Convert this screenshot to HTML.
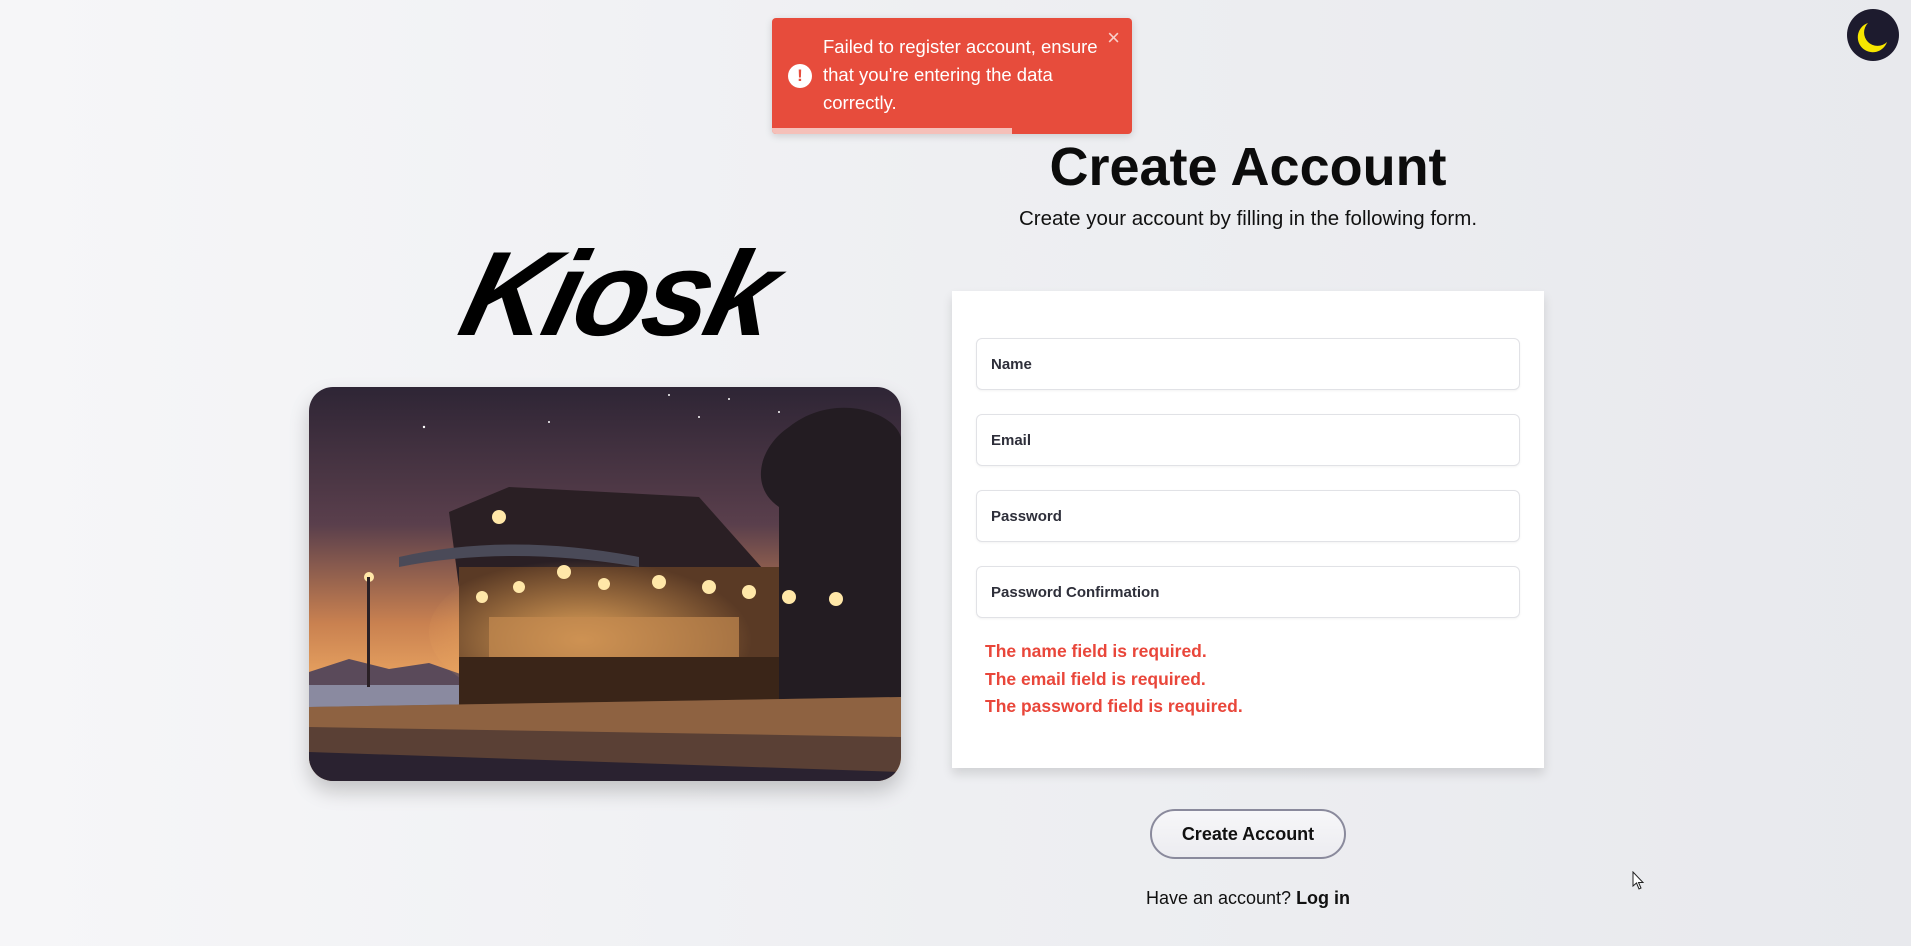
<!DOCTYPE html>
<html><head><meta charset="utf-8"><style>
*{margin:0;padding:0;box-sizing:border-box}
body{width:1911px;height:946px;overflow:hidden;position:relative;font-family:"Liberation Sans",sans-serif;background:linear-gradient(90deg,#f6f6f8 0%,#eeeff2 50%,#e8e9ed 100%);}
.abs{position:absolute}
.toast{left:772px;top:18px;width:360px;height:116px;background:#e74c3c;border-radius:4px;box-shadow:0 2px 8px rgba(0,0,0,.15);color:#fff;font-family:"Liberation Sans",sans-serif;font-size:18.5px;line-height:28px;overflow:hidden}
.toast .txt{position:absolute;left:51px;top:15px;width:290px}
.toast .bar{position:absolute;left:0;bottom:0;width:240px;height:6px;background:#f5c0b9}
.toast .x{position:absolute;right:12px;top:6px;font-size:22px;color:#f8d0cb}
.toast .ic{position:absolute;left:16px;top:46px;width:24px;height:24px;border-radius:50%;background:#fff;color:#e74c3c;font-weight:bold;font-size:17px;line-height:24px;text-align:center}
h1{position:absolute;left:1000px;width:496px;top:136px;text-align:center;font-size:54px;font-weight:bold;color:#0c0c0c}
.sub{position:absolute;left:960px;width:576px;top:207px;text-align:center;font-size:20.5px;color:#111}
.card{left:952px;top:291px;width:592px;height:477px;background:#fff;box-shadow:0 6px 10px rgba(0,0,0,.12)}
.inp{position:absolute;left:24px;width:544px;height:52px;border:1px solid #e1e2e6;border-radius:6px;box-shadow:0 1px 2px rgba(0,0,0,.05);font-size:15px;font-weight:bold;color:#2e2f3a;padding-left:14px;line-height:52px}
.err{position:absolute;left:33px;top:347px;color:#e9463a;font-size:17.5px;font-weight:bold;line-height:27.5px}
.btn{left:1150px;top:809px;width:196px;height:50px;border-radius:25px;border:2px solid #8a8a9c;background:linear-gradient(180deg,#f7f7f9,#ececf0);text-align:center;line-height:46px;font-weight:bold;font-size:18px;color:#111}
.login{left:1100px;width:296px;top:888px;text-align:center;font-size:18px;color:#111}
.img{left:309px;top:387px;width:592px;height:394px;border-radius:24px;overflow:hidden;box-shadow:0 10px 20px rgba(0,0,0,.2)}
</style></head><body>

<svg class="abs" style="left:450px;top:195px" width="340" height="165" viewBox="0 0 340 165">
<text x="10" y="140" font-family="Liberation Sans, sans-serif" font-style="italic" font-weight="bold" font-size="120" transform="skewX(-14) translate(30,0)" fill="#000" letter-spacing="-4">Kiosk</text>
</svg>

<div class="abs img">
<svg width="592" height="394" viewBox="0 0 592 394">
<defs>
<linearGradient id="sky" x1="0" y1="0" x2="0" y2="1">
<stop offset="0" stop-color="#2e2535"/><stop offset="0.35" stop-color="#5a3f4c"/><stop offset="0.6" stop-color="#c98150"/><stop offset="0.75" stop-color="#e9a461"/><stop offset="1" stop-color="#e9a461"/></linearGradient>
<radialGradient id="glow" cx="0.45" cy="0.55" r="0.5"><stop offset="0" stop-color="#f2b060" stop-opacity=".9"/><stop offset="1" stop-color="#f2b060" stop-opacity="0"/></radialGradient>
</defs>
<rect width="592" height="394" fill="url(#sky)"/>
<path d="M0 305 L0 285 L40 272 L80 282 L120 276 L160 290 L592 290 L592 305Z" fill="#5a4a5a"/>
<rect y="298" width="592" height="40" fill="#8a8aa0"/>
<path d="M480 40 C530 0 600 30 592 60 L592 340 L470 340 L470 120 C440 100 450 60 480 40Z" fill="#231c22"/>
<path d="M140 125 L200 100 L390 110 L470 200 L470 330 L150 330 L150 200 Z" fill="#2a1f24"/>
<path d="M90 170 Q200 145 330 170 L330 180 Q200 158 90 180Z" fill="#4a4a58"/>
<rect x="150" y="180" width="320" height="140" fill="#5a3a25"/>
<ellipse cx="290" cy="245" rx="170" ry="80" fill="url(#glow)"/>
<rect x="180" y="230" width="250" height="40" fill="#c48a50" opacity=".7"/>
<rect x="150" y="270" width="320" height="50" fill="#3a2518"/>
<path d="M0 320 L592 310 L592 394 L0 394Z" fill="#5a4035"/>
<path d="M0 320 L592 310 L592 350 L0 340Z" fill="#b07a4a" opacity=".6"/>
<path d="M0 365 L592 385 L592 394 L0 394Z" fill="#2a2230"/>
<g fill="#ffe7a8"><circle cx="190" cy="130" r="7"/><circle cx="255" cy="185" r="7"/><circle cx="400" cy="200" r="7"/><circle cx="440" cy="205" r="7"/><circle cx="480" cy="210" r="7"/><circle cx="527" cy="212" r="7"/><circle cx="295" cy="197" r="6"/><circle cx="210" cy="200" r="6"/><circle cx="350" cy="195" r="7"/><circle cx="173" cy="210" r="6"/><circle cx="60" cy="190" r="5"/></g>
<rect x="58" y="190" width="3" height="110" fill="#2a2025"/>
<g fill="#fff"><circle cx="115" cy="40" r="1.2"/><circle cx="240" cy="35" r="1"/><circle cx="360" cy="8" r="1"/><circle cx="390" cy="30" r="1"/><circle cx="470" cy="25" r="1"/><circle cx="420" cy="12" r="1"/></g>
</svg>
</div>

<div class="abs toast"><div class="ic">!</div><div class="txt">Failed to register account, ensure that you're entering the data correctly.</div><div class="x">×</div><div class="bar"></div></div>

<svg class="abs" style="left:1847px;top:9px" width="52" height="52" viewBox="0 0 52 52">
<circle cx="26" cy="26" r="26" fill="#1d1b2e"/>
<path d="M21 14 A15 15 0 1 0 40 33 A12 12 0 0 1 21 14Z" fill="#f7e600"/>
</svg>

<h1>Create Account</h1>
<div class="sub">Create your account by filling in the following form.</div>

<div class="abs card">
<div class="inp" style="top:47px">Name</div>
<div class="inp" style="top:123px">Email</div>
<div class="inp" style="top:199px">Password</div>
<div class="inp" style="top:275px">Password Confirmation</div>
<div class="err">The name field is required.<br>The email field is required.<br>The password field is required.</div>
</div>

<div class="abs btn">Create Account</div>
<div class="abs login">Have an account? <b>Log in</b></div>

<svg class="abs" style="left:1632px;top:871px" width="14" height="20" viewBox="0 0 14 20"><path d="M1 1 L1 15 L4.5 12 L7 18 L9 17 L6.5 11.5 L11 11.5Z" fill="#fff" stroke="#222" stroke-width="1"/></svg>
</body></html>
